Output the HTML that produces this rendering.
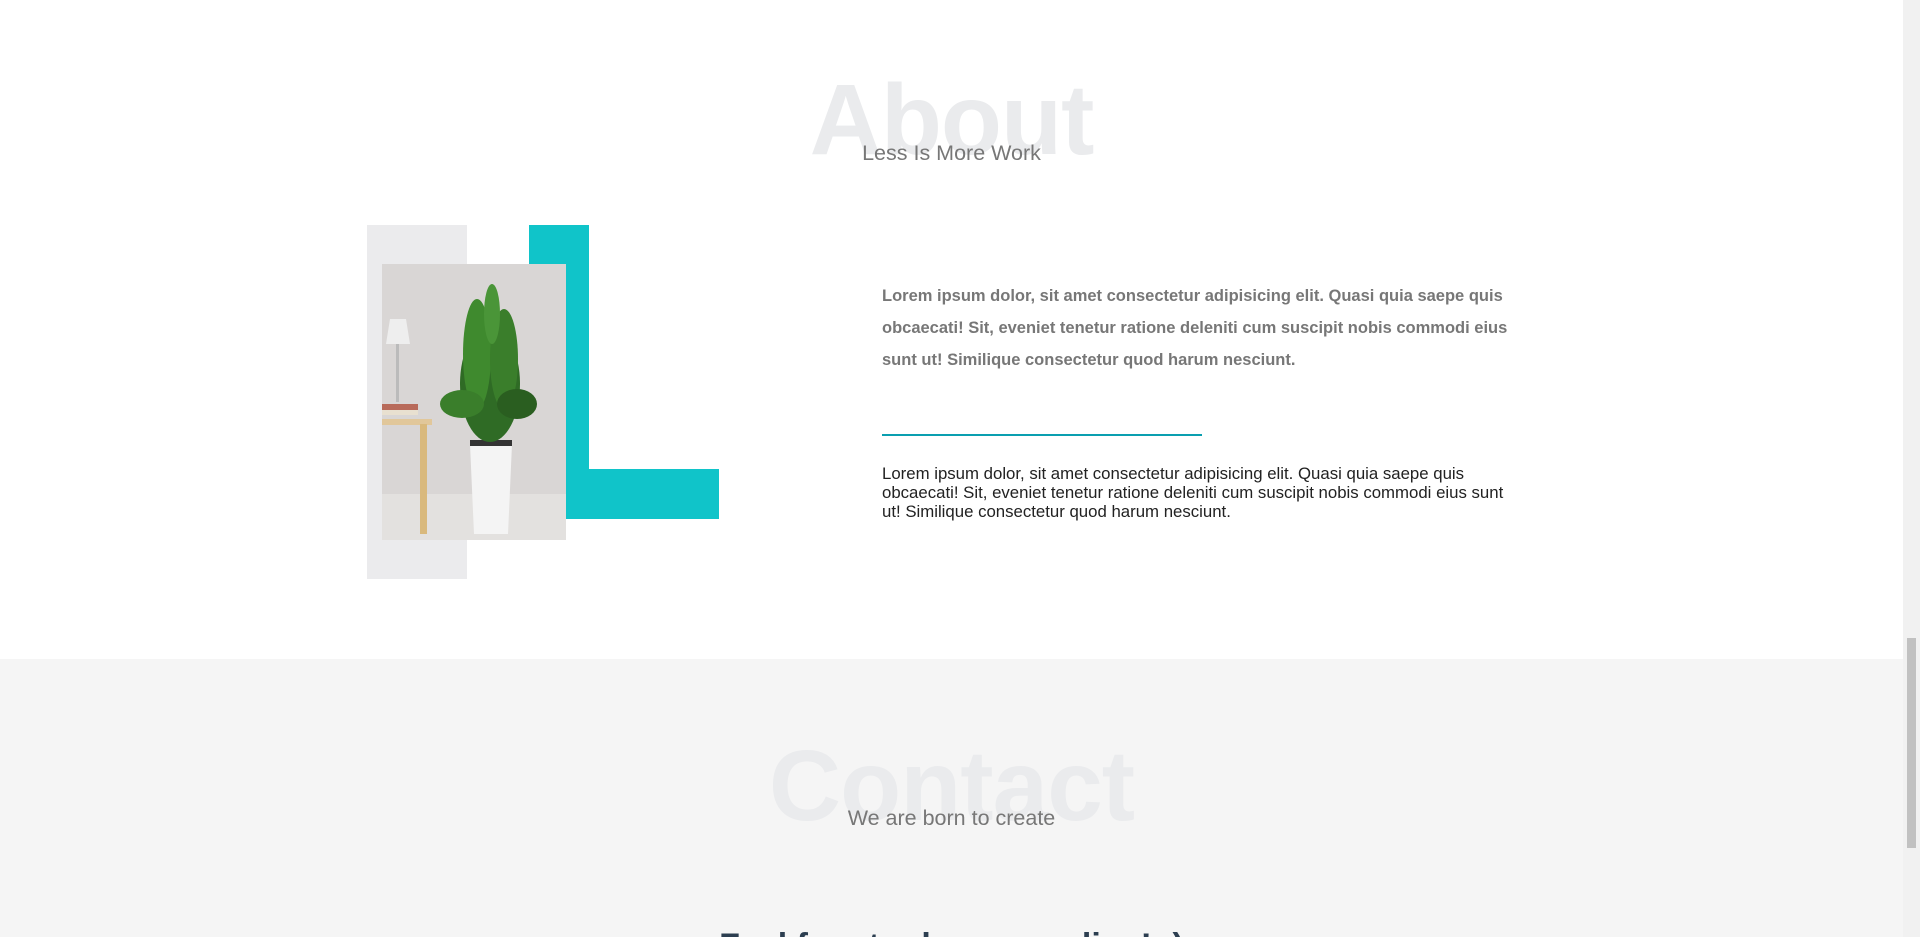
<!DOCTYPE html>
<html><head><meta charset="utf-8"><style>
html,body{margin:0;padding:0;width:1920px;height:937px;overflow:hidden;background:#fff;font-family:"Liberation Sans",sans-serif}
#wrap{position:relative;width:1920px;height:937px;overflow:hidden}
.abs{position:absolute}
.big{position:absolute;left:0;width:1903px;text-align:center;font-weight:900;font-size:100px;color:#eaebed;letter-spacing:-1px;line-height:100px}
.sub{position:absolute;left:0;width:1903px;text-align:center;font-size:21.5px;color:#777;line-height:24px}
.sb{position:absolute;right:0;top:0;width:17px;height:937px;background:#f1f1f1}
</style></head><body><div id="wrap">
<div class="big" style="top:70px">About</div>
<div class="sub" style="top:141px">Less Is More Work</div>

<div class="abs" style="left:367px;top:225px;width:100px;height:354px;background:#ebebed"></div>
<div class="abs" style="left:529px;top:225px;width:60px;height:294px;background:#10c4c9"></div>
<div class="abs" style="left:560px;top:469px;width:159px;height:50px;background:#10c4c9"></div>
<svg class="abs" style="left:382px;top:264px" width="184" height="276" viewBox="0 0 184 276">
<rect width="184" height="276" fill="#d9d6d5"/>
<rect y="230" width="184" height="46" fill="#e3e1df"/>
<rect x="0" y="155" width="50" height="6" fill="#e1c79a"/>
<rect x="38" y="160" width="7" height="110" fill="#d9b97d"/>
<rect x="0" y="140" width="36" height="6" fill="#b86a5a"/>
<rect x="0" y="146" width="36" height="5" fill="#e8e0d0"/>
<polygon points="8,55 24,55 28,80 4,80" fill="#eeeeee"/>
<rect x="14" y="80" width="3" height="58" fill="#bbb"/>
<polygon points="88,180 130,180 126,270 92,270" fill="#f4f4f4"/>
<rect x="88" y="176" width="42" height="6" fill="#333"/>
<g fill="#2f6b25">
<ellipse cx="108" cy="120" rx="30" ry="58"/>
<ellipse cx="95" cy="90" rx="14" ry="55" fill="#3f8a2e"/>
<ellipse cx="122" cy="95" rx="14" ry="50" fill="#3a7e2b"/>
<ellipse cx="80" cy="140" rx="22" ry="14" fill="#3a7e2b"/>
<ellipse cx="135" cy="140" rx="20" ry="15" fill="#2a5e20"/>
<ellipse cx="110" cy="50" rx="8" ry="30" fill="#4a9538"/>
</g>
</svg>

<div class="abs" style="left:882px;top:280px;width:640px;font-size:16.5px;font-weight:bold;color:#777;line-height:32px">Lorem ipsum dolor, sit amet consectetur adipisicing elit. Quasi quia saepe quis obcaecati! Sit, eveniet tenetur ratione deleniti cum suscipit nobis commodi eius sunt ut! Similique consectetur quod harum nesciunt.</div>
<div class="abs" style="left:882px;top:434px;width:320px;height:2px;background:#0a9fb0"></div>
<div class="abs" style="left:882px;top:464px;width:640px;font-size:16.8px;color:#222;line-height:19px">Lorem ipsum dolor, sit amet consectetur adipisicing elit. Quasi quia saepe quis obcaecati! Sit, eveniet tenetur ratione deleniti cum suscipit nobis commodi eius sunt ut! Similique consectetur quod harum nesciunt.</div>

<div class="abs" style="left:0;top:659px;width:1903px;height:278px;background:#f5f5f5"></div>
<div class="big" style="top:736px">Contact</div>
<div class="sub" style="top:806px">We are born to create</div>
<div class="abs" style="left:0;top:926px;width:1903px;height:11px;overflow:hidden"><div style="text-align:center;font-size:34px;font-weight:bold;color:#2c3e50;line-height:40px">Feel free to drop me a line! :)</div></div>

<div class="sb"><div style="position:absolute;left:4px;top:638px;width:9px;height:210px;background:#c1c1c1"></div></div>
</div></body></html>
